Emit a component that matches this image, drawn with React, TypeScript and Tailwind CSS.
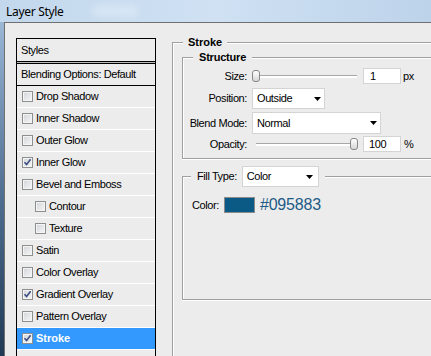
import React from "react";

type Row = { label: string; on?: boolean; sub?: boolean; active?: boolean };

const rows: Row[] = [
  { label: "Drop Shadow" },
  { label: "Inner Shadow" },
  { label: "Outer Glow" },
  { label: "Inner Glow", on: true },
  { label: "Bevel and Emboss" },
  { label: "Contour", sub: true },
  { label: "Texture", sub: true },
  { label: "Satin" },
  { label: "Color Overlay" },
  { label: "Gradient Overlay", on: true },
  { label: "Pattern Overlay" },
  { label: "Stroke", on: true, active: true },
];

function Check({ on }: { on?: boolean }) {
  return (
    <span className="flex h-[11px] w-[11px] shrink-0 items-center justify-center border border-[#8e8f8f] bg-gradient-to-br from-[#d2d4d8] to-[#f7f7f7] shadow-[inset_0_0_0_1px_#f4f4f4]">
      {on ? (
        <svg width="9" height="9" viewBox="0 0 9 9" aria-hidden>
          <path d="M1.5 4.2L3.6 6.6L7.6 1.2" fill="none" stroke="#3d5083" strokeWidth="1.6" />
        </svg>
      ) : null}
    </span>
  );
}

function Select({ value, className }: { value: string; className: string }) {
  return (
    <div className={`flex items-center justify-between border border-[#d4d4d4] bg-white pl-[4px] ${className}`}>
      <span>{value}</span>
      <svg width="7" height="4" viewBox="0 0 7 4" aria-hidden>
        <path d="M0 0h7L3.5 4z" fill="#000" />
      </svg>
    </div>
  );
}

function Slider({ thumb }: { thumb: string }) {
  return (
    <div className="relative h-[12px] w-[108px]">
      <div className="absolute left-[4px] right-[3px] top-[5px] h-[3px] border-t border-[#a8a8a8] bg-white" />
      <div
        className={`absolute top-0 h-[12px] w-[8px] rounded-[3px] border border-[#878787] bg-gradient-to-b from-white to-[#d6d6d6] ${thumb}`}
      />
    </div>
  );
}

function NumBox({ value, className }: { value: string; className: string }) {
  return (
    <div className={`flex h-[16px] w-[38px] items-center border border-[#d4d4d4] bg-white ${className}`}>
      {value}
    </div>
  );
}

export default function App() {
  return (
    <div
      className="flex h-[356px] w-[431px] flex-col overflow-hidden text-[11px] leading-[13px] tracking-[-0.4px] text-black"
      style={{ fontFamily: '"Liberation Sans", Arial, sans-serif' }}
    >
      {/* title bar */}
      <div className="flex h-[22px] shrink-0 items-center bg-gradient-to-r from-[#c3d8ed] via-[#cfe1f3] to-[#bdd3ea] pl-[6px]">
        <span
          className="text-[12px] tracking-[-0.3px] text-black"
          style={{ fontFamily: '"Noto Sans", sans-serif' }}
        >
          Layer Style
        </span>
        <span className="ml-[28px] h-[12px] w-[46px] rounded-full bg-white/25 blur-[3px]" />
      </div>

      <div className="flex flex-1">
        <div className="w-[4px] shrink-0 bg-gradient-to-b from-[#9ab7d6] via-[#4f6f92] to-[#1d3651]" />
        <div className="flex flex-1 items-start border-l border-t border-[#707070] bg-[#ececec]">
          {/* styles list */}
          <div className="ml-[11px] mt-[15px] h-[330px] w-[140px] shrink-0 border border-black">
            <div className="flex h-[22px] items-center pl-[4px]">Styles</div>
            <div className="h-[3px] border-y border-black bg-[#bdbdbd]" />
            <div className="flex h-[22px] items-center border-b border-black pl-[4px]">
              Blending Options: Default
            </div>
            {rows.map((r) => (
              <div
                key={r.label}
                className={`flex h-[22px] items-center gap-[3px] border-b border-white ${r.sub ? "pl-[18px]" : "pl-[5px]"} ${r.active ? "bg-[#3399ff] font-bold tracking-[0px] text-white" : ""}`}
              >
                <Check on={r.on} />
                <span>{r.label}</span>
              </div>
            ))}
          </div>

          {/* stroke panel */}
          <fieldset className="ml-[16px] mt-[13px] h-[330px] w-[280px] shrink-0 border border-[#a0a0a0] shadow-[inset_1px_1px_0_#fff]">
            <legend className="ml-[10px] bg-[#ececec] px-[5px] font-bold tracking-[0px]">Stroke</legend>

            <fieldset className="ml-[9px] mt-[2px] border border-[#a0a0a0] pb-[6px] shadow-[inset_1px_1px_0_#fff,0_1px_0_#fff]">
              <legend className="ml-[10px] bg-[#ececec] px-[6px] font-bold tracking-[-0.2px]">Structure</legend>

              <div className="mt-[4px] flex h-[16px] items-center">
                <span className="w-[64px] text-right">Size:</span>
                <div className="ml-[5px]">
                  <Slider thumb="left-0" />
                </div>
                <NumBox value="1" className="ml-[3px] pl-[6px]" />
                <span className="ml-[2px]">px</span>
              </div>

              <div className="mt-[4px] flex h-[21px] items-center">
                <span className="w-[64px] text-right">Position:</span>
                <Select value="Outside" className="ml-[5px] h-[21px] w-[73px] pr-[3px]" />
              </div>

              <div className="mt-[3px] flex h-[22px] items-center">
                <span className="w-[64px] text-right">Blend Mode:</span>
                <Select value="Normal" className="ml-[5px] h-[22px] w-[129px] pr-[3px]" />
              </div>

              <div className="mt-[2px] flex h-[16px] items-center">
                <span className="w-[64px] text-right">Opacity:</span>
                <div className="ml-[5px]">
                  <Slider thumb="left-[98px]" />
                </div>
                <NumBox value="100" className="ml-[3px] pl-[5px]" />
                <span className="ml-[3px]">%</span>
              </div>
            </fieldset>

            <fieldset className="ml-[9px] mt-[7px] h-[134px] border border-[#a0a0a0] shadow-[inset_1px_1px_0_#fff,0_1px_0_#fff]">
              <legend className="ml-[8px] flex items-center bg-[#ececec] px-[6px]">
                <span>Fill Type:</span>
                <Select value="Color" className="ml-[5px] h-[21px] w-[77px] pr-[5px]" />
              </legend>

              <div className="mt-[10px] flex items-center pl-[9px]">
                <span>Color:</span>
                <span className="ml-[5px] h-[16px] w-[31px] border border-[#8a8a8a] bg-[#0b5a86]" />
                <span className="ml-[5px] text-[16px] leading-[16px] tracking-[-0.2px] text-[#1d5b87]">#095883</span>
              </div>
            </fieldset>
          </fieldset>
        </div>
      </div>
    </div>
  );
}
